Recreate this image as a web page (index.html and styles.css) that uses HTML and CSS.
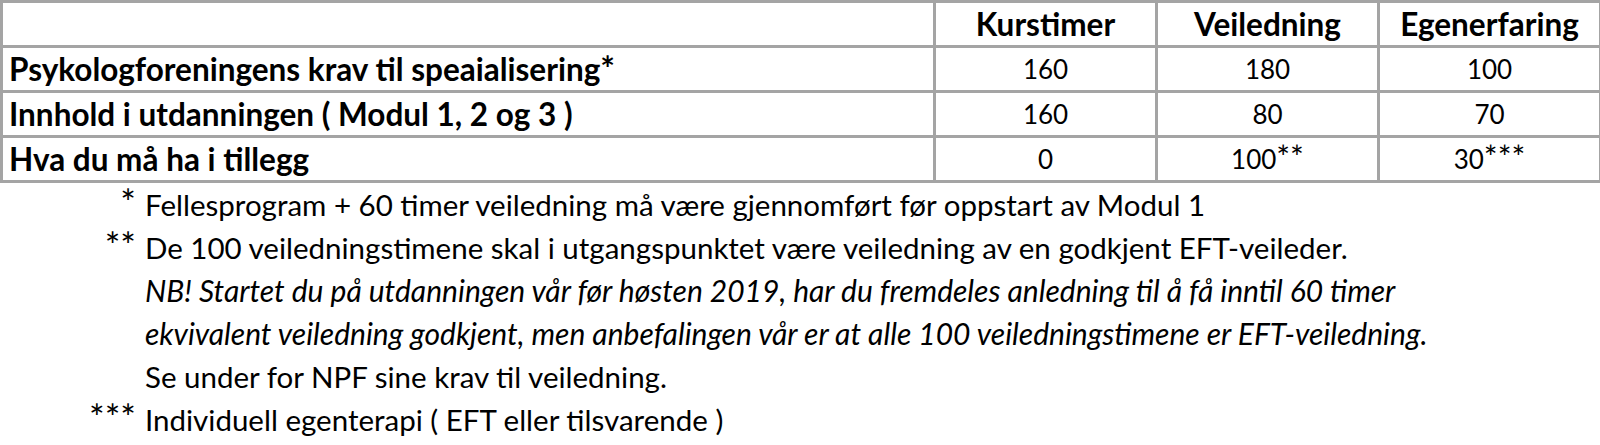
FILE: index.html
```html
<!DOCTYPE html>
<html lang="no">
<head>
<meta charset="utf-8">
<title>Krav til spesialisering</title>
<link rel="stylesheet" href="styles.css">
</head>
<body>
<table class="krav">
  <colgroup>
    <col class="c-label">
    <col class="c-val">
    <col class="c-val">
    <col class="c-val">
  </colgroup>
  <thead>
    <tr>
      <th class="label"></th>
      <th>Kurstimer</th>
      <th>Veiledning</th>
      <th>Egenerfaring</th>
    </tr>
  </thead>
  <tbody>
    <tr>
      <th class="label">Psykologforeningens krav til speaialisering<span class="ast">*</span></th>
      <td>160</td>
      <td>180</td>
      <td>100</td>
    </tr>
    <tr>
      <th class="label">Innhold i utdanningen ( Modul 1, 2 og 3 )</th>
      <td>160</td>
      <td>80</td>
      <td>70</td>
    </tr>
    <tr>
      <th class="label">Hva du må ha i tillegg</th>
      <td>0</td>
      <td>100<span class="ast">**</span></td>
      <td>30<span class="ast">***</span></td>
    </tr>
  </tbody>
</table>

<div class="notes">
  <span class="mark"><span class="ast">*</span></span>
  <span class="text">Fellesprogram + 60 timer veiledning må være gjennomført før oppstart av Modul 1</span>

  <span class="mark"><span class="ast">**</span></span>
  <div class="text">
    <p>De 100 veiledningstimene skal i utgangspunktet være veiledning av en godkjent EFT-veileder.</p>
    <p class="em">NB! Startet du på utdanningen vår før høsten 2019, har du fremdeles anledning til å få inntil 60 timer</p>
    <p class="em">ekvivalent veiledning godkjent, men anbefalingen vår er at alle 100 veiledningstimene er EFT-veiledning.</p>
    <p>Se under for NPF sine krav til veiledning.</p>
  </div>

  <span class="mark"><span class="ast">***</span></span>
  <span class="text">Individuell egenterapi ( EFT eller tilsvarende )</span>
</div>
</body>
</html>
```

FILE: styles.css
```css
html, body {
  margin: 0;
  padding: 0;
  background: #ffffff;
}

body {
  font-family: Lato, "Open Sans", "Liberation Sans", sans-serif;
  color: #000000;
  width: 1600px;
}

.krav {
  border-collapse: collapse;
  width: 1598px;
  table-layout: fixed;
  font-size: 31.5px;
}

.c-label { width: 933px; }
.c-val { width: 222px; }

.krav th,
.krav td {
  border: 3px solid #a4a4a4;
  height: 42px;
  padding: 0 6px;
  text-align: center;
  vertical-align: middle;
  line-height: 36px;
}

.krav th {
  font-weight: 700;
}

.krav td {
  font-weight: 400;
  font-size: 26px;
}

.krav th.label {
  text-align: left;
  padding-left: 6px;
}

.ast {
  font-size: 1.25em;
  line-height: 0;
  font-weight: 400;
}

.krav th .ast {
  font-weight: 700;
  font-size: 1.1em;
}

.notes {
  display: grid;
  grid-template-columns: 136px 1fr;
  column-gap: 9px;
  margin-top: 0;
  font-size: 29.5px;
  line-height: 43px;
}

.mark {
  text-align: right;
}

.text p {
  margin: 0;
}

.text .em {
  font-style: italic;
  font-size: 30px;
}
```
